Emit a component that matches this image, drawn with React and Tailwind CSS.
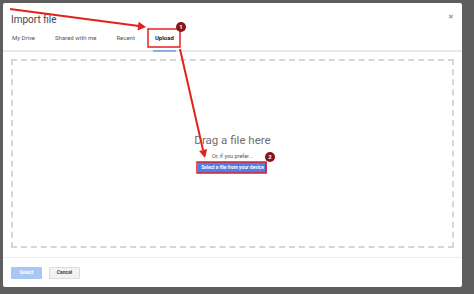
const TABS = ["My Drive", "Shared with me", "Recent", "Upload"];

function Annotations() {
  return (
    <svg className="pointer-events-none absolute inset-0" width="474" height="294" viewBox="0 0 474 294">
      {/* arrow 1 */}
      <line x1="10" y1="9" x2="139" y2="26" stroke="#e3211c" strokeWidth="2" />
      <polygon points="146,27 137.6,30.4 138.6,21.8" fill="#e3211c" />
      <rect x="148" y="29" width="32" height="18" fill="none" stroke="#e3211c" strokeWidth="1.5" />
      <circle cx="181" cy="27" r="5" fill="#8a1414" />
      <text x="181" y="29.2" textAnchor="middle" fontSize="6" fontWeight="700" fill="#fff" fontFamily="Roboto, sans-serif">1</text>

      {/* arrow 2 */}
      <line x1="180" y1="49" x2="203" y2="150" stroke="#e3211c" strokeWidth="2" />
      <polygon points="205,158 199.2,150.9 207.2,149.1" fill="#e3211c" />
      <rect x="197" y="162" width="69" height="11" fill="none" stroke="#e3211c" strokeWidth="1.5" />
      <circle cx="270" cy="157" r="5" fill="#8a1414" />
      <text x="270" y="159.2" textAnchor="middle" fontSize="6" fontWeight="700" fill="#fff" fontFamily="Roboto, sans-serif">2</text>
    </svg>
  );
}

export default function App() {
  return (
    <div className="relative h-[294px] w-[474px] overflow-hidden bg-[#5e5e5e] pl-[3px] pt-[3px] font-['Roboto',sans-serif]">
      <div className="flex h-[284px] w-[459px] flex-col rounded-[2px] bg-white">
        <div className="flex h-[23px] items-end justify-between pl-[8px] pr-[8px]">
          <span className="text-[10px] leading-none text-[#444]">Import file</span>
          <span className="mb-[4px] text-[7px] leading-none text-[#777]">✕</span>
        </div>

        <div className="flex h-[28px] items-center border-b-2 border-[#e8e8e8] pl-[9px]">
          {TABS.map((tab) => (
            <div
              key={tab}
              className={
                tab === "Upload"
                  ? "relative flex h-full items-center text-[6px] font-bold text-[#222]"
                  : "mr-[20px] flex h-full items-center text-[6px] text-[#555]"
              }
            >
              {tab}
              {tab === "Upload" ? (
                <span className="absolute -bottom-[2px] -left-[2px] -right-[2px] h-[2px] bg-[#8ab0ea]" />
              ) : null}
            </div>
          ))}
        </div>

        <div className="flex flex-1 flex-col px-[8px] pt-[7px]">
          <div className="flex h-[189px] flex-col items-center justify-center border-2 border-dashed border-[#d6d6d6] pt-[2px]">
            <div className="text-[11.5px] leading-none text-[#6f6f6f]">Drag a file here</div>
            <div className="mt-[7px] text-[5.5px] leading-none text-[#555]">Or, if you prefer...</div>
            <div className="mt-[3px] flex h-[11px] w-[69px] items-center justify-center bg-[#4d7fe8] text-[4.8px] font-bold text-white">
              Select a file from your device
            </div>
          </div>
        </div>

        <div className="mt-[9px] flex h-[31px] gap-[7px] border-t border-[#ececec] pl-[8px] pt-[9px]">
          <div className="flex h-[12px] w-[31px] items-center justify-center rounded-[1px] bg-[#a9c6f7] text-[5px] font-bold text-white">
            Select
          </div>
          <div className="flex h-[12px] w-[31px] items-center justify-center rounded-[1px] border border-[#dcdcdc] bg-[#f2f2f2] text-[5px] font-bold text-[#444]">
            Cancel
          </div>
        </div>
      </div>
      <Annotations />
    </div>
  );
}
